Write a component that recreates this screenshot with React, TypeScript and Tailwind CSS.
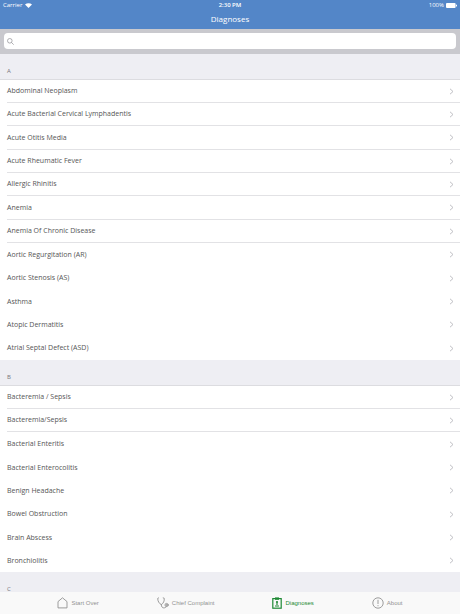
import { useState, type ReactNode } from "react";

interface Diagnosis {
  name: string;
  divider?: boolean;
}

interface Section {
  letter: string;
  items: Diagnosis[];
}

const SECTIONS: Section[] = [
  {
    letter: "A",
    items: [
      { name: "Abdominal Neoplasm", divider: true },
      { name: "Acute Bacterial Cervical Lymphadentis", divider: true },
      { name: "Acute Otitis Media", divider: true },
      { name: "Acute Rheumatic Fever", divider: true },
      { name: "Allergic Rhinitis", divider: true },
      { name: "Anemia", divider: true },
      { name: "Anemia Of Chronic Disease", divider: true },
      { name: "Aortic Regurgitation (AR)" },
      { name: "Aortic Stenosis (AS)" },
      { name: "Asthma" },
      { name: "Atopic Dermatitis" },
      { name: "Atrial Septal Defect (ASD)" },
    ],
  },
  {
    letter: "B",
    items: [
      { name: "Bacteremia / Sepsis", divider: true },
      { name: "Bacteremia/Sepsis", divider: true },
      { name: "Bacterial Enteritis" },
      { name: "Bacterial Enterocolitis" },
      { name: "Benign Headache" },
      { name: "Bowel Obstruction" },
      { name: "Brain Abscess" },
      { name: "Bronchiolitis" },
    ],
  },
  { letter: "C", items: [] },
];

function HomeIcon() {
  return (
    <svg width="11" height="12" viewBox="0 0 11 12" fill="none" stroke="currentColor" strokeWidth="0.9" strokeLinejoin="round">
      <path d="M1 4.6 5.5 0.8 10 4.6V10.9H1Z" />
    </svg>
  );
}

function StethoscopeIcon() {
  return (
    <svg width="12" height="12" viewBox="0 0 12 12" fill="none" stroke="currentColor" strokeWidth="0.9" strokeLinecap="round">
      <path d="M1.6 0.9 0.7 1.4C0.8 4 2 6.6 4.3 7.6 6.4 6.4 7.6 3.8 7.2 1.2L6.2 0.9" />
      <path d="M4.3 7.6C4.4 9.8 5.2 10.9 6.8 10.9 8.3 10.9 9 10.2 9.3 9.6" />
      <circle cx="9.6" cy="8" r="1.6" />
      <circle cx="9.6" cy="8" r="0.3" />
    </svg>
  );
}

function ClipboardIcon() {
  return (
    <svg width="10" height="12" viewBox="0 0 10 12" fill="none" stroke="currentColor" strokeWidth="1.2">
      <rect x="0.8" y="1.6" width="8.4" height="9.6" />
      <path d="M3 0.4H7V2.8H3Z" fill="currentColor" stroke="none" />
      <circle cx="5" cy="5" r="1.1" fill="currentColor" stroke="none" />
      <path d="M5 5.5V8M3 9H7" />
    </svg>
  );
}

function AboutIcon() {
  return (
    <svg width="12" height="12" viewBox="0 0 12 12" fill="none" stroke="currentColor" strokeWidth="0.9">
      <circle cx="6" cy="6" r="5.2" />
      <path d="M6 2.8V7M6 8.2V9.2" />
    </svg>
  );
}

const TABS: { id: string; label: string; icon: ReactNode }[] = [
  { id: "start", label: "Start Over", icon: <HomeIcon /> },
  { id: "complaint", label: "Chief Complaint", icon: <StethoscopeIcon /> },
  { id: "diagnoses", label: "Diagnoses", icon: <ClipboardIcon /> },
  { id: "about", label: "About", icon: <AboutIcon /> },
];

function StatusBar() {
  return (
    <div className="grid grid-cols-3 items-center h-[10px] px-[3px] text-[6px] leading-none">
      <div className="flex items-center gap-[3px]">
        <span>Carrier</span>
        <svg width="7" height="5" viewBox="0 0 7 5" fill="currentColor">
          <path d="M3.5 5 0 1.5C2 -0.3 5 -0.3 7 1.5Z" />
        </svg>
      </div>
      <span className="text-center font-semibold">2:30 PM</span>
      <div className="flex items-center justify-end gap-[2px]">
        <span>100%</span>
        <svg width="11" height="5" viewBox="0 0 11 5" fill="currentColor">
          <rect width="9.6" height="5" rx="1" />
          <rect x="10" y="1.6" width="1" height="1.8" rx="0.5" />
        </svg>
      </div>
    </div>
  );
}

function DiagnosisRow({ name, divider }: Diagnosis) {
  return (
    <li className="h-[23px] pl-[7px] nth-[3n]:h-6">
      <a
        href="#"
        className={
          divider
            ? "flex h-full items-center justify-between border-b border-[#e2e2e5] pr-[6px]"
            : "flex h-full items-center justify-between pr-[6px]"
        }
      >
        <span>{name}</span>
        <svg width="5" height="7" viewBox="0 0 5 7" fill="none" stroke="#b9b9be" strokeWidth="0.9">
          <path d="M1 0.8 4 3.5 1 6.2" />
        </svg>
      </a>
    </li>
  );
}

export default function App() {
  const [query, setQuery] = useState("");
  const [active, setActive] = useState("diagnoses");

  const matches = (d: Diagnosis) => d.name.toLowerCase().includes(query.toLowerCase());

  return (
    <div className="flex h-screen flex-col bg-[#eeeef3] font-['Open_Sans',sans-serif] text-[#555555]">
      <header className="shrink-0 bg-[#5386c8] text-white">
        <StatusBar />
        <h1 className="h-[19px] text-center text-[8px] leading-[18px]">Diagnoses</h1>
      </header>

      <div className="shrink-0 bg-[#c9c9ce] px-1 pt-1 pb-[5px]">
        <label className="flex h-4 items-center gap-1 rounded bg-white px-[3px]">
          <svg width="7" height="7" viewBox="0 0 7 7" fill="none" stroke="#8e8e93" strokeWidth="0.7">
            <circle cx="2.8" cy="2.8" r="2.3" />
            <path d="M4.5 4.5 6.7 6.7" />
          </svg>
          <input
            type="text"
            aria-label="Search diagnoses"
            value={query}
            onChange={(e) => setQuery(e.target.value)}
            className="min-w-0 flex-1 text-[7px] outline-none"
          />
        </label>
      </div>

      <main className="min-h-0 flex-1 overflow-y-auto [scrollbar-width:none]">
        {SECTIONS.map(({ letter, items }) => (
          <section key={letter}>
            <h2 className="flex h-[26px] items-end border-b border-[#dcdce0] px-[7px] pb-[5px] text-[6px] leading-[6px] text-[#77777c]">
              {letter}
            </h2>
            <ul className="bg-white text-[7px] leading-[10px]">
              {items.filter(matches).map((d) => (
                <DiagnosisRow key={d.name} {...d} />
              ))}
            </ul>
          </section>
        ))}
      </main>

      <nav className="flex h-[22px] shrink-0 items-center justify-center gap-[58px] bg-[#f9f9f9] font-['Liberation_Sans',sans-serif] text-[6px] leading-none">
        {TABS.map(({ id, label, icon }) => (
          <button
            key={id}
            type="button"
            onClick={() => setActive(id)}
            className={
              id === active
                ? "flex items-center gap-[3px] text-[#1f8a35]"
                : "flex items-center gap-[3px] text-[#929292]"
            }
          >
            {icon}
            <span>{label}</span>
          </button>
        ))}
      </nav>
    </div>
  );
}
